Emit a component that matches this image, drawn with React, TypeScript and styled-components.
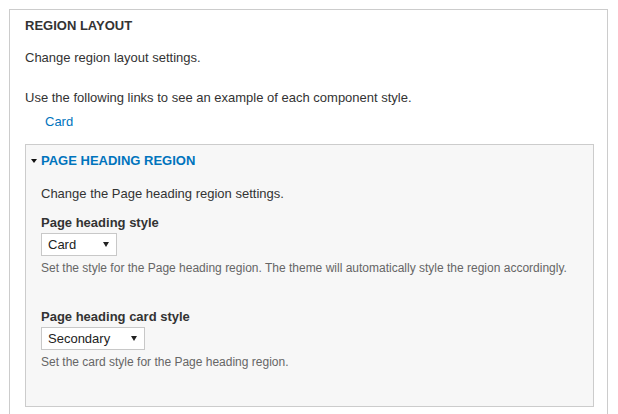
import React from "react";
import styled, { createGlobalStyle } from "styled-components";

const Global = createGlobalStyle`
  html, body { margin: 0; padding: 0; background: #fff; }
  body {
    font-family: "Liberation Sans", Arial, sans-serif;
    font-size: 13px;
    color: #333;
  }
`;

const Page = styled.div`
  padding: 9px 10px 0 9px;
`;

const Fieldset = styled.section`
  width: 599px;
  box-sizing: border-box;
  border: 1px solid #ccc;
  border-bottom: none;
  padding: 7px 13px 20px 15px;
  display: flex;
  flex-direction: column;
`;

const Legend = styled.h2`
  margin: 0;
  font-size: 13px;
  line-height: 18px;
  font-weight: bold;
  text-transform: uppercase;
  color: #333;
`;

const Text = styled.p<{ $mt: number }>`
  margin: ${(p) => p.$mt}px 0 0 0;
  font-size: 13px;
  line-height: 18px;
  color: #333;
`;

const LinkList = styled.ul`
  list-style: none;
  margin: 6px 0 0 0;
  padding: 0 0 0 20px;
`;

const Link = styled.a`
  color: #0074bd;
  text-decoration: none;
  font-size: 13px;
  line-height: 18px;
`;

const Details = styled.div`
  margin-top: 13px;
  background: #f7f7f7;
  border: 1px solid #ccc;
  padding: 7px 15px 35px 5px;
  display: flex;
  flex-direction: column;
`;

const Summary = styled.div`
  display: flex;
  align-items: center;
  gap: 4px;
  color: #0074bd;
  font-weight: bold;
  font-size: 13px;
  line-height: 18px;
  text-transform: uppercase;
`;

const Body = styled.div`
  padding-left: 10px;
  display: flex;
  flex-direction: column;
`;

const Item = styled.div<{ $mt: number }>`
  margin-top: ${(p) => p.$mt}px;
  display: flex;
  flex-direction: column;
  align-items: flex-start;
`;

const Label = styled.label`
  font-weight: bold;
  font-size: 13px;
  line-height: 18px;
  color: #333;
`;

const SelectBox = styled.div<{ $w: number }>`
  margin-top: 1px;
  width: ${(p) => p.$w}px;
  height: 23px;
  box-sizing: border-box;
  border: 1px solid #c8c8c8;
  background: #fff;
  display: flex;
  align-items: center;
  justify-content: space-between;
  padding: 0 7px 0 6px;
  font-size: 13px;
  color: #222;
`;

const Description = styled.div`
  margin-top: 3px;
  font-size: 12px;
  line-height: 18px;
  color: #666;
`;

const Caret = () => (
  <svg width="6" height="4" viewBox="0 0 6 4">
    <path d="M0 0H6L3 4Z" fill="#111" />
  </svg>
);

const SelectArrow = () => (
  <svg width="6" height="5" viewBox="0 0 6 5">
    <path d="M0 0H6L3 5Z" fill="#222" />
  </svg>
);

export default function App() {
  return (
    <>
      <Global />
      <Page>
        <Fieldset>
          <Legend>Region layout</Legend>
          <Text $mt={14}>Change region layout settings.</Text>
          <Text $mt={22}>Use the following links to see an example of each component style.</Text>
          <LinkList>
            <li>
              <Link href="#">Card</Link>
            </li>
          </LinkList>
          <Details>
            <Summary>
              <Caret />
              Page heading region
            </Summary>
            <Body>
              <Text $mt={15}>Change the Page heading region settings.</Text>
              <Item $mt={11}>
                <Label>Page heading style</Label>
                <SelectBox $w={76}>
                  <span>Card</span>
                  <SelectArrow />
                </SelectBox>
                <Description>
                  Set the style for the Page heading region. The theme will automatically style the region accordingly.
                </Description>
              </Item>
              <Item $mt={31}>
                <Label>Page heading card style</Label>
                <SelectBox $w={104}>
                  <span>Secondary</span>
                  <SelectArrow />
                </SelectBox>
                <Description>Set the card style for the Page heading region.</Description>
              </Item>
            </Body>
          </Details>
        </Fieldset>
      </Page>
    </>
  );
}
